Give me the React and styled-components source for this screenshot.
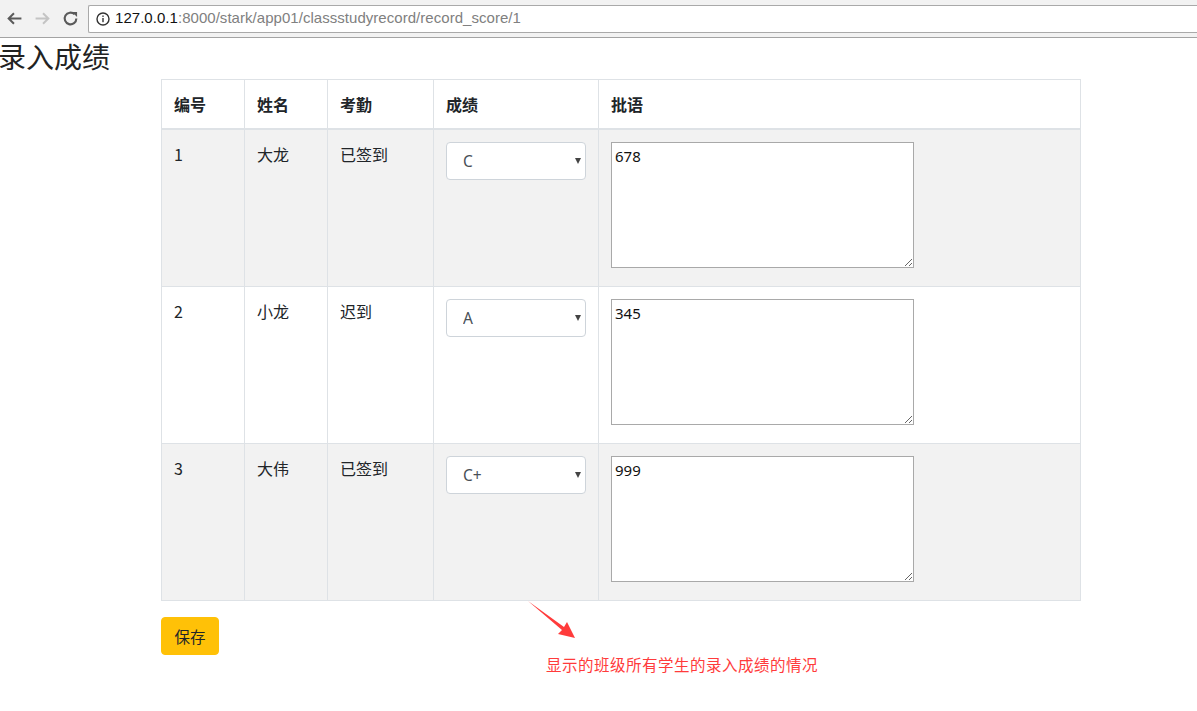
import React from "react";
import styled, { createGlobalStyle } from "styled-components";

const Global = createGlobalStyle`
  html, body { margin: 0; padding: 0; background: #fff; }
  body {
    font-family: "Noto Sans CJK SC", "Noto Sans", sans-serif;
    font-size: 16px;
    line-height: 1.5;
    color: #212529;
    width: 1197px;
    height: 711px;
    overflow: hidden;
  }
  * { box-sizing: border-box; }
`;

const Chrome = styled.div`
  height: 38px;
  background: #f2f2f2;
  border-bottom: 1px solid #a3a3a3;
  display: flex;
  align-items: center;
  padding-left: 0;
  position: relative;
`;

const NavBtn = styled.div`
  width: 28px;
  height: 28px;
  display: flex;
  align-items: center;
  justify-content: center;
  color: ${(p) => (p.$disabled ? "#c4c4c4" : "#5a5a5a")};
`;

const Omnibox = styled.div`
  margin-left: 4px;
  flex: 1;
  height: 28px;
  background: #fff;
  border: 1px solid #a9a9a9;
  border-right: none;
  border-radius: 2px 0 0 2px;
  display: flex;
  align-items: center;
  padding-left: 7px;
  gap: 5px;
  font-family: "Liberation Sans", Arial, sans-serif;
  font-size: 15px;
  letter-spacing: 0.04px;
  color: #808080;
`;

const Host = styled.span`
  color: #111;
`;

const Page = styled.div`
  position: relative;
`;

const Title = styled.h1`
  margin: 0;
  padding-top: 1px;
  font-size: 28px;
  font-weight: 400;
  line-height: 34px;
  color: #222;
  margin-left: -2px;
`;

const Content = styled.div`
  margin-left: 161px;
  width: 920px;
  padding-top: 6px;
`;

const Table = styled.table`
  width: 919px;
  border-collapse: collapse;
  table-layout: fixed;
  border: 1px solid #dee2e6;
`;

const Th = styled.th`
  text-align: left;
  font-weight: 700;
  padding: 12px;
  border: 1px solid #dee2e6;
  border-bottom: 2px solid #dee2e6;
  width: ${(p) => p.$w}px;
  vertical-align: bottom;
`;

const Row = styled.tr`
  background: ${(p) => (p.$striped ? "#f2f2f2" : "#fff")};
`;

const Td = styled.td`
  padding: 12px;
  border: 1px solid #dee2e6;
  vertical-align: top;
`;

const SelectWrap = styled.div`
  position: relative;
  width: 140px;
  height: 38px;
  margin-bottom: 94px;
`;

const Select = styled.select`
  appearance: none;
  -webkit-appearance: none;
  width: 140px;
  height: 38px;
  border: 1px solid #ced4da;
  border-radius: 4px;
  background: #fff;
  padding: 0 24px 0 16px;
  font-family: "Noto Sans", "Noto Sans CJK SC", sans-serif;
  font-size: 15.5px;
  color: #495057;
  outline: none;
`;

const Caret = styled.div`
  position: absolute;
  right: 5px;
  top: 16px;
  width: 0;
  height: 0;
  border-left: 3.5px solid transparent;
  border-right: 3.5px solid transparent;
  border-top: 6px solid #444;
  pointer-events: none;
`;

const Area = styled.textarea`
  display: block;
  width: 303px;
  height: 126px;
  margin-bottom: 6px;
  border: 1px solid #a9a9a9;
  border-radius: 0;
  padding: 3px 3px;
  font-family: "Noto Sans", "Noto Sans CJK SC", sans-serif;
  font-size: 15px;
  line-height: 20px;
  color: #111;
  resize: both;
  background: #fff;
`;

const SaveBtn = styled.button`
  margin-top: 16px;
  height: 38px;
  width: 58px;
  padding: 0;
  background: #ffc107;
  border: 1px solid #ffc107;
  border-radius: 4px;
  font-family: "Noto Sans CJK SC", sans-serif;
  font-size: 15.5px;
  color: #212529;
  line-height: 36px;
`;

const Note = styled.div`
  position: absolute;
  left: 546px;
  top: 616px;
  font-family: "Noto Sans CJK SC", sans-serif;
  font-size: 15.5px;
  line-height: 20px;
  color: #ff3b3b;
  letter-spacing: 0.5px;
`;

const Arrow = styled.svg`
  position: absolute;
  left: 525px;
  top: 560px;
`;

const rows = [
  { id: 1, name: "大龙", att: "已签到", score: "C", note: "678" },
  { id: 2, name: "小龙", att: "迟到", score: "A", note: "345" },
  { id: 3, name: "大伟", att: "已签到", score: "C+", note: "999" },
];

const grades = ["A+", "A", "B+", "B", "C+", "C", "D"];

export default function App() {
  return (
    <>
      <Global />
      <Chrome>
        <NavBtn>
          <svg width="17" height="17" viewBox="0 0 16 16">
            <path d="M14.5 8H2.5M7.5 3L2.5 8l5 5" fill="none" stroke="currentColor" strokeWidth="1.9" />
          </svg>
        </NavBtn>
        <NavBtn $disabled>
          <svg width="17" height="17" viewBox="0 0 16 16">
            <path d="M1.5 8h12M8.5 3l5 5-5 5" fill="none" stroke="currentColor" strokeWidth="1.9" />
          </svg>
        </NavBtn>
        <NavBtn>
          <svg width="17" height="17" viewBox="0 0 16 16">
            <path d="M13.5 8a5.5 5.5 0 1 1-1.6-3.9" fill="none" stroke="currentColor" strokeWidth="2" />
            <path d="M9.5 1.8h4.7v4.7z" fill="currentColor" />
          </svg>
        </NavBtn>
        <Omnibox>
          <svg width="14" height="14" viewBox="0 0 14 14">
            <circle cx="7" cy="7" r="6" fill="none" stroke="#333" strokeWidth="1.4" />
            <rect x="6.3" y="6" width="1.4" height="4.2" fill="#333" />
            <rect x="6.3" y="3.5" width="1.4" height="1.4" fill="#333" />
          </svg>
          <span>
            <Host>127.0.0.1</Host>:8000/stark/app01/classstudyrecord/record_score/1
          </span>
        </Omnibox>
      </Chrome>
      <Page>
        <Title>录入成绩</Title>
        <Content>
          <Table>
            <thead>
              <tr>
                <Th $w={83}>编号</Th>
                <Th $w={83}>姓名</Th>
                <Th $w={106}>考勤</Th>
                <Th $w={165}>成绩</Th>
                <Th $w={482}>批语</Th>
              </tr>
            </thead>
            <tbody>
              {rows.map((r, i) => (
                <Row key={r.id} $striped={i % 2 === 0}>
                  <Td>{r.id}</Td>
                  <Td>{r.name}</Td>
                  <Td>{r.att}</Td>
                  <Td>
                    <SelectWrap>
                      <Select defaultValue={r.score}>
                        {grades.map((g) => (
                          <option key={g} value={g}>
                            {g}
                          </option>
                        ))}
                      </Select>
                      <Caret />
                    </SelectWrap>
                  </Td>
                  <Td>
                    <Area defaultValue={r.note} />
                  </Td>
                </Row>
              ))}
            </tbody>
          </Table>
          <SaveBtn>保存</SaveBtn>
        </Content>
        <Arrow width="60" height="50" viewBox="0 0 60 50">
          <polygon points="3,3 37,32 33,36 50,40 42,24 39,29" fill="#ff3b3b" />
        </Arrow>
        <Note>显示的班级所有学生的录入成绩的情况</Note>
      </Page>
    </>
  );
}
